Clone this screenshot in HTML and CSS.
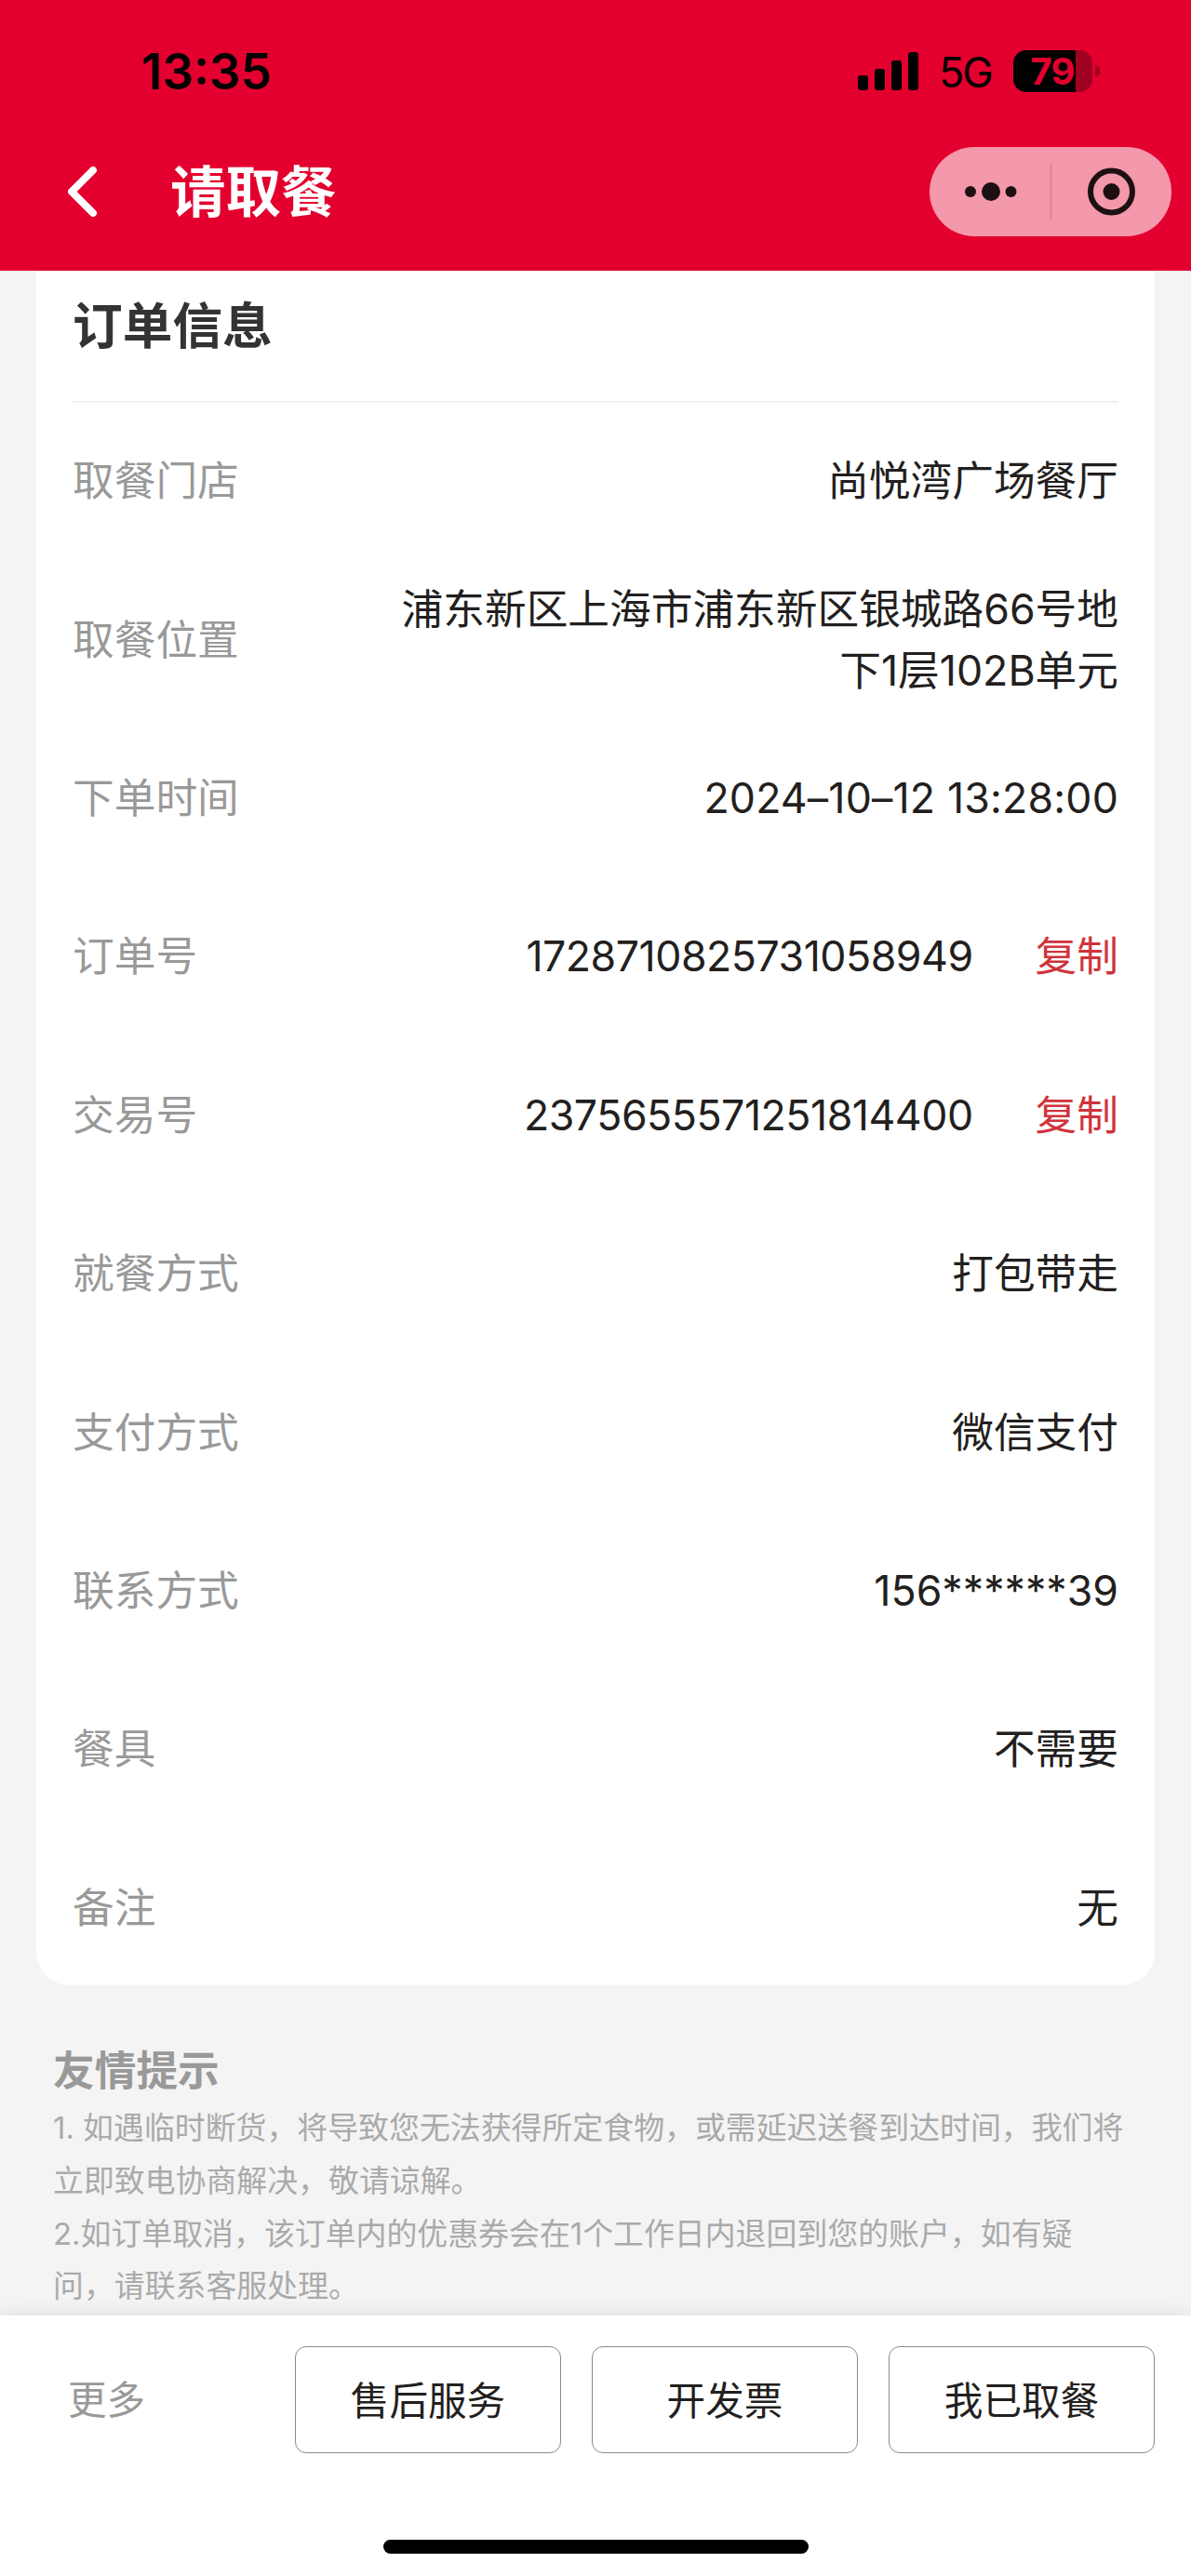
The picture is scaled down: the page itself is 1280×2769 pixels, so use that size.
FILE: index.html
```html
<!DOCTYPE html>
<html lang="zh-CN">
<head>
    <meta charset="UTF-8">
    <meta name="viewport" content="width=device-width, initial-scale=1.0">
    <title>请取餐</title>
    <link rel="stylesheet" href="styles.css">
</head>
<body>
    <header class="header">
        <div class="status-bar">
            <span class="time">13:35</span>
            <div class="status-icons">
                <svg class="signal" width="65" height="41" viewBox="0 0 65 41">
                    <rect x="0" y="25" width="11" height="16" rx="3"/>
                    <rect x="18" y="18" width="11" height="23" rx="3"/>
                    <rect x="36" y="9" width="11" height="32" rx="3"/>
                    <rect x="54" y="0" width="11" height="41" rx="3"/>
                </svg>
                <span class="network">5G</span>
                <div class="battery"><span class="battery-level">79</span></div>
                <span class="battery-tip"></span>
            </div>
        </div>
        <div class="nav-bar">
            <svg class="back" width="32" height="54" viewBox="0 0 32 54">
                <path d="M27 4 L4 27 L27 50"/>
            </svg>
            <h1 class="nav-title">请取餐</h1>
            <div class="capsule">
                <svg width="260" height="96" viewBox="0 0 260 96">
                    <circle cx="44" cy="48" r="6"/>
                    <circle cx="66" cy="48" r="10"/>
                    <circle cx="87.500" cy="48" r="6"/>
                    <path class="capsule-line" d="M130.500 18 V78"/>
                    <circle class="ring" cx="195.500" cy="48" r="22.500"/>
                    <circle cx="195.500" cy="48" r="9"/>
                </svg>
            </div>
        </div>
    </header>

    <main class="content">
        <section class="card">
            <h2 class="card-title">订单信息</h2>
            <div class="row"><span class="label">取餐门店</span><span class="value">尚悦湾广场餐厅</span></div>
            <div class="row"><span class="label">取餐位置</span><span class="value">浦东新区上海市浦东新区银城路66号地<br>下1层102B单元</span></div>
            <div class="row"><span class="label">下单时间</span><span class="value date">2024–10–12 13:28:00</span></div>
            <div class="row"><span class="label">订单号</span><span class="value number">1728710825731058949</span><a class="copy">复制</a></div>
            <div class="row"><span class="label">交易号</span><span class="value number">2375655571251814400</span><a class="copy">复制</a></div>
            <div class="row"><span class="label">就餐方式</span><span class="value">打包带走</span></div>
            <div class="row"><span class="label">支付方式</span><span class="value">微信支付</span></div>
            <div class="row"><span class="label">联系方式</span><span class="value">156******39</span></div>
            <div class="row"><span class="label">餐具</span><span class="value">不需要</span></div>
            <div class="row"><span class="label">备注</span><span class="value">无</span></div>
        </section>

        <section class="tips">
            <h3 class="tips-title">友情提示</h3>
            <p>1. 如遇临时断货，将导致您无法获得所定食物，或需延迟送餐到达时间，我们将<br>立即致电协商解决，敬请谅解。</p>
            <p>2.如订单取消，该订单内的优惠券会在1个工作日内退回到您的账户，如有疑<br>问，请联系客服处理。</p>
        </section>
    </main>

    <footer class="footer">
        <div class="actions">
            <span class="more">更多</span>
            <button class="btn">售后服务</button>
            <button class="btn">开发票</button>
            <button class="btn">我已取餐</button>
        </div>
        <div class="home-indicator"></div>
    </footer>
</body>
</html>
```
FILE: styles.css
```css
* {
    box-sizing: border-box;
}
body {
    display: flex;
    flex-direction: column;
    width: 1280px;
    height: 2769px;
    margin: 0;
    background-color: #f4f4f4;
    color: #231f20;
    font-family: Inter, "Noto Sans CJK SC", sans-serif;
    font-size: 44.700px;
    font-weight: 370;
    overflow: hidden;
}
h1, h2, h3, p {
    margin: 0;
}

/* header */
.header {
    height: 291px;
    flex-shrink: 0;
    background-color: #e3002f;
}
.status-bar {
    display: flex;
    justify-content: space-between;
    align-items: center;
    height: 152px;
    padding: 0 98px 0 152px;
    color: #000;
}
.time {
    padding-top: 2px;
    font-size: 53px;
    font-weight: 600;
    line-height: 60px;
}
.status-icons {
    display: flex;
    align-items: center;
}
.network {
    margin-left: 22px;
    width: 58px;
    margin-right: 22px;
    font-size: 45px;
    font-weight: 400;
    line-height: 50px;
    letter-spacing: -2px;
    padding-top: 4px;
}
.battery {
    width: 85px;
    height: 45px;
    border-radius: 14px;
    background: linear-gradient(to right, #000 67px, #a00022 67px);
    text-align: center;
}
.battery-level {
    display: block;
    color: #e3002f;
    font-size: 40px;
    font-weight: 700;
    line-height: 45px;
    letter-spacing: -1px;
    padding-right: 1px;
}
.battery-tip {
    width: 5px;
    height: 13px;
    margin-left: 3px;
    border-radius: 0 5px 5px 0;
    background-color: #a00022;
}
.nav-bar {
    display: flex;
    align-items: center;
    height: 108px;
    padding: 0 21px 0 73px;
}
.back {
    fill: none;
    stroke: #fff;
    stroke-width: 8;
    stroke-linecap: round;
    stroke-linejoin: round;
}
.nav-title {
    margin-left: 78px;
    color: #fff;
    font-size: 59.500px;
    font-weight: 600;
    line-height: 80px;
}
.capsule {
    width: 260px;
    height: 96px;
    margin-left: auto;
    border-radius: 48px;
    background-color: #f498ab;
}
.capsule svg {
    display: block;
    fill: #1d1012;
}
.capsule .ring {
    fill: none;
    stroke: #1d1012;
    stroke-width: 6;
}
.capsule-line {
    stroke: #e58296;
    stroke-width: 2;
}

/* order info */
.content {
    flex: 1;
}
.card {
    height: 1843px;
    margin: 0 39px;
    padding: 0 39px;
    border-radius: 0 0 36px 36px;
    background-color: #fff;
}
.card-title {
    height: 142px;
    padding-top: 21px;
    border-bottom: 2px solid #f0f0f0;
    color: #333;
    font-size: 53.700px;
    font-weight: 600;
    line-height: 78px;
}
.row {
    display: flex;
    align-items: center;
    height: 170.400px;
    padding-bottom: 2px;
    line-height: 66px;
}
.label {
    color: #999;
}
.value {
    margin-left: auto;
    text-align: right;
}
.date {
    letter-spacing: 0.150px;
}
.number {
    letter-spacing: -0.500px;
}
.copy {
    margin-left: 67px;
    color: #d0333b;
}

/* tips */
.tips {
    padding: 59px 57px 0;
    color: #aaa;
    font-size: 32.900px;
    line-height: 56.800px;
}
.tips-title {
    color: #999;
    font-size: 44.700px;
    font-weight: 600;
    line-height: 66px;
}
.tips p {
    white-space: nowrap;
}

/* footer */
.footer {
    height: 280px;
    flex-shrink: 0;
    background-color: #fff;
    box-shadow: 0 0 20px rgba(0, 0, 0, 0.1);
}
.actions {
    display: flex;
    gap: 33px;
    padding: 33px 39px 0 73px;
    font-size: 41.600px;
}
.more {
    margin-right: auto;
    color: #999;
    line-height: 117px;
}
.btn {
    width: 286px;
    height: 115px;
    padding: 0 0 4px;
    border: 1px solid #8a8a8a;
    border-radius: 12px;
    background-color: #fff;
    color: #231f20;
    font: inherit;
}
.home-indicator {
    width: 457px;
    height: 15px;
    margin: 91px auto 0;
    border-radius: 8px;
    background-color: #000;
}
```
